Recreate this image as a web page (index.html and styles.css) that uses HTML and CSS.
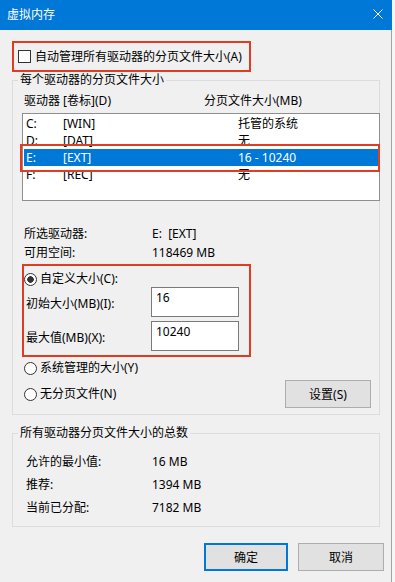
FILE: index.html
```html
<!DOCTYPE html>
<html lang="zh-CN">
<head>
    <meta charset="UTF-8">
    <meta name="viewport" content="width=device-width, initial-scale=1.0">
    <title>虚拟内存</title>
    <link rel="stylesheet" href="styles.css">
</head>
<body>

    <div class="window">
        <!-- Title bar -->
        <div class="titlebar">
            <span class="title">虚拟内存</span>
            <svg class="close" width="10" height="10" viewBox="0 0 10 10">
                <path d="M0.5 0.5L9.5 9.5M9.5 0.5L0.5 9.5" stroke="#ffffff" stroke-width="1" fill="none"/>
            </svg>
        </div>

        <div class="content">
            <!-- Auto manage checkbox -->
            <div class="mark auto-mark">
                <label class="check"><span class="checkbox"></span>自动管理所有驱动器的分页文件大小(A)</label>
            </div>

            <!-- Per drive group -->
            <fieldset class="group drives">
                <legend>每个驱动器的分页文件大小</legend>
                <div class="group-inner">
                    <div class="cols">
                        <span class="col-drive">驱动器 [卷标](D)</span>
                        <span>分页文件大小(MB)</span>
                    </div>

                    <div class="listbox">
                        <div class="row"><span class="c1">C:</span><span class="c2">[WIN]</span><span>托管的系统</span></div>
                        <div class="row"><span class="c1">D:</span><span class="c2">[DAT]</span><span>无</span></div>
                        <div class="row selected"><span class="c1">E:</span><span class="c2">[EXT]</span><span>16 - 10240</span></div>
                        <div class="row"><span class="c1">F:</span><span class="c2">[REC]</span><span>无</span></div>
                        <div class="mark list-mark"></div>
                    </div>

                    <div class="info">
                        <div class="info-row"><span class="info-label">所选驱动器:</span><span>E:&nbsp;&nbsp;[EXT]</span></div>
                        <div class="info-row"><span class="info-label">可用空间:</span><span>118469 MB</span></div>
                    </div>

                    <div class="mark custom-mark">
                        <div class="radio-row"><span class="radio on"></span>自定义大小(C):</div>
                        <div class="size-row">
                            <span class="size-label">初始大小(MB)(I):</span>
                            <div class="field">16</div>
                        </div>
                        <div class="size-row">
                            <span class="size-label">最大值(MB)(X):</span>
                            <div class="field">10240</div>
                        </div>
                    </div>

                    <div class="radio-row sys-row"><span class="radio"></span>系统管理的大小(Y)</div>
                    <div class="none-row">
                        <div class="radio-row"><span class="radio"></span>无分页文件(N)</div>
                        <button class="btn set-btn">设置(S)</button>
                    </div>
                </div>
            </fieldset>

            <!-- Totals group -->
            <fieldset class="group totals">
                <legend>所有驱动器分页文件大小的总数</legend>
                <div class="totals-inner">
                    <div class="total-row"><span class="total-label">允许的最小值:</span><span>16 MB</span></div>
                    <div class="total-row"><span class="total-label">推荐:</span><span>1394 MB</span></div>
                    <div class="total-row"><span class="total-label">当前已分配:</span><span>7182 MB</span></div>
                </div>
            </fieldset>

            <!-- Dialog buttons -->
            <div class="actions">
                <button class="btn ok-btn">确定</button>
                <button class="btn cancel-btn">取消</button>
            </div>
        </div>
    </div>

</body>
</html>
```

FILE: styles.css
```css
* {
    box-sizing: border-box;
}

body {
    margin: 0;
    background-color: #f6f6f6;
    color: #000000;
    font-family: "Noto Sans", "Noto Sans CJK SC", sans-serif;
    font-size: 12px;
}

.window {
    width: 392px;
}

.titlebar {
    height: 30px;
    background-color: #0078d7;
    color: #ffffff;
    display: flex;
    align-items: center;
    justify-content: space-between;
    padding: 0 9px 0 7px;
}

.title {
    line-height: 16px;
}

.close {
    display: block;
    margin-top: -2px;
}

.content {
    height: 552px;
    background-color: #f0f0f0;
    border-right: 1px solid #a3a3a3;
    padding: 11px 0 0 12px;
}

/* Red annotation boxes */
.mark {
    border: 2px solid #e03c22;
}

.auto-mark {
    width: 239px;
    height: 31px;
    display: flex;
    align-items: center;
    padding-left: 4px;
}

.check {
    display: flex;
    align-items: center;
    gap: 4px;
    line-height: 16px;
}

.checkbox {
    width: 13px;
    height: 13px;
    border: 1px solid #333333;
    background-color: #ffffff;
}

/* Group boxes */
.group {
    margin: 0;
    padding: 0;
    width: 368px;
    min-width: 0;
    border: 1px solid #dcdcdc;
}

.group legend {
    margin-left: 5px;
    padding: 0 2px;
    line-height: 16px;
    height: 16px;
}

.group-inner {
    padding-bottom: 6px;
}

.cols {
    display: flex;
    margin-top: 5px;
    height: 16px;
    line-height: 16px;
    padding-left: 11px;
}

.col-drive {
    width: 180px;
}

.listbox {
    position: relative;
    margin: 4px 0 0 9px;
    width: 358px;
    height: 88px;
    border: 1px solid #8f8f8f;
    background-color: #ffffff;
    padding: 1px;
}

.row {
    display: flex;
    height: 17px;
    line-height: 17px;
    padding-left: 2px;
    white-space: nowrap;
}

.row.selected {
    background-color: #0078d7;
    color: #ffffff;
}

.c1 {
    width: 37px;
}

.c2 {
    width: 175px;
}

.list-mark {
    position: absolute;
    left: -3px;
    top: 30px;
    width: 360px;
    height: 28px;
}

.info {
    margin-top: 23px;
}

.info-row {
    display: flex;
    height: 19px;
    line-height: 19px;
    padding-left: 11px;
}

.info-label {
    width: 128px;
}

.custom-mark {
    margin: 2px 0 0 9px;
    width: 229px;
    padding: 5px 0 4px 0;
}

.radio-row {
    display: flex;
    align-items: center;
    gap: 3px;
    height: 16px;
    line-height: 16px;
    white-space: nowrap;
}

.radio {
    width: 13px;
    height: 13px;
    border: 1px solid #333333;
    border-radius: 50%;
    background-color: #ffffff;
}

.radio.on {
    background: radial-gradient(circle, #333333 0 3px, #ffffff 3.5px);
}

.size-row {
    display: flex;
    height: 30px;
}

.size-row + .size-row {
    margin-top: 4px;
}

.size-label {
    width: 127px;
    padding: 9px 0 0 2px;
    line-height: 16px;
}

.field {
    width: 88px;
    height: 30px;
    border: 1px solid #7a7a7a;
    background-color: #ffffff;
    padding: 2px 0 0 4px;
    line-height: 16px;
}

.sys-row {
    margin: 3px 0 0 11px;
}

.none-row {
    display: flex;
    align-items: center;
    justify-content: space-between;
    margin-top: 4px;
    height: 28px;
    padding: 0 8px 0 11px;
}

.btn {
    height: 28px;
    background-color: #e1e1e1;
    border: 1px solid #adadad;
    font-family: inherit;
    font-size: 12px;
    color: #000000;
    padding: 0;
}

.set-btn {
    width: 86px;
}

.totals {
    margin-top: 10px;
}

.totals-inner {
    padding: 9px 0 7px 13px;
}

.total-row {
    display: flex;
    height: 23px;
    line-height: 23px;
}

.total-label {
    width: 126px;
}

.actions {
    display: flex;
    justify-content: flex-end;
    gap: 10px;
    margin-top: 16px;
    padding-right: 7px;
}

.ok-btn {
    width: 84px;
    border: 2px solid #0078d7;
}

.cancel-btn {
    width: 86px;
}
```
